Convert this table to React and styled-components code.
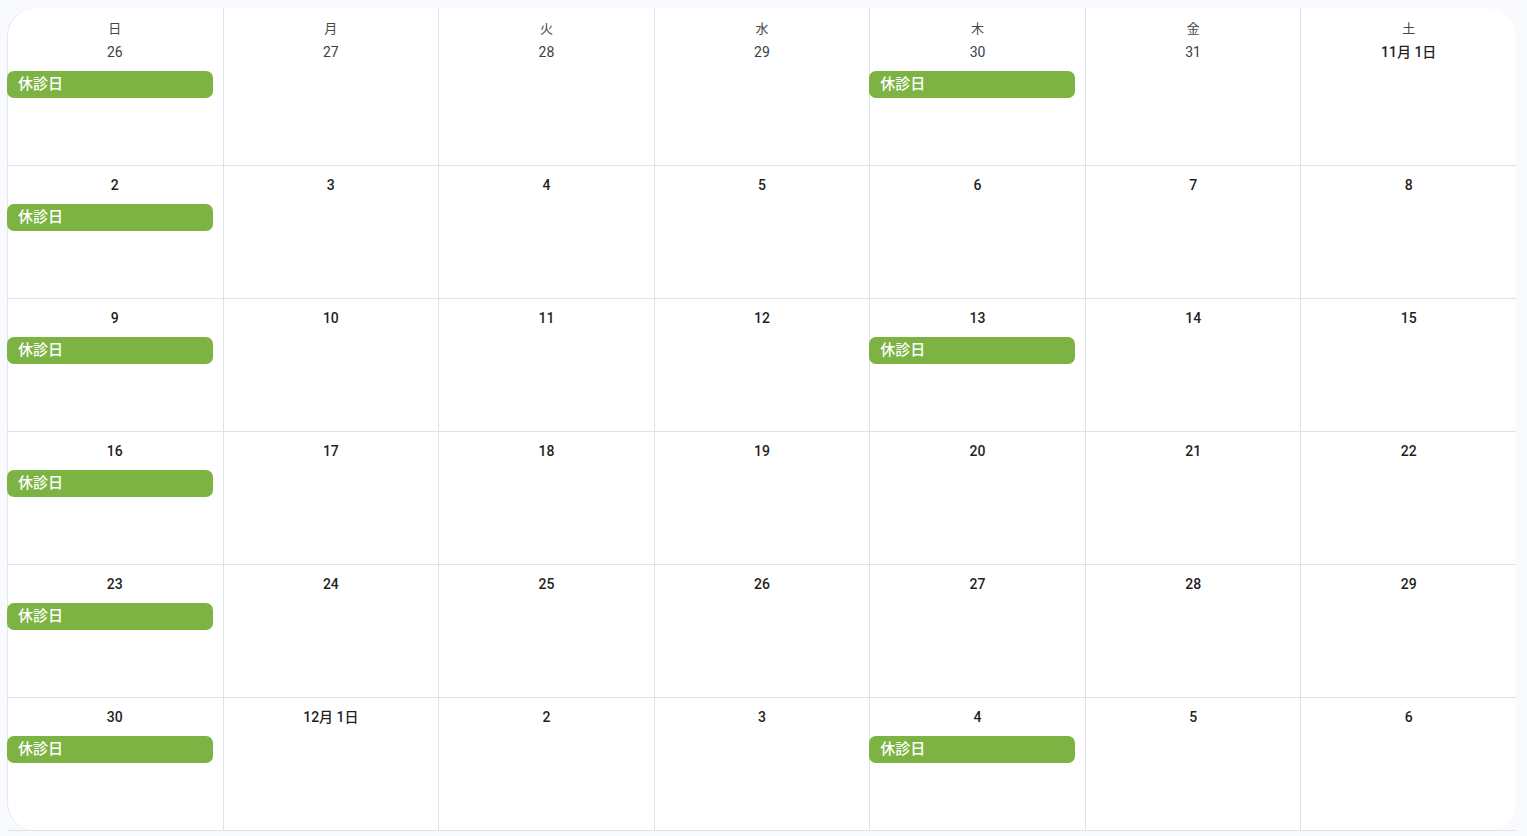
import React from "react";
import styled, { createGlobalStyle } from "styled-components";

const GlobalStyle = createGlobalStyle`
  html, body {
    margin: 0;
    padding: 0;
    background: #f8fafd;
  }
  body {
    font-family: Roboto, "Noto Sans CJK JP", sans-serif;
    color: #1f1f1f;
  }
`;

const Page = styled.div`
  padding: 8px 11px 0 7px;
`;

const Month = styled.div`
  display: grid;
  grid-template-columns: repeat(7, 1fr);
  grid-template-rows: 158px repeat(5, 133px);
  background: #fff;
  border-radius: 28px;
  box-shadow: inset 1px 0 0 #e3e7ee;
`;

const Cell = styled.div`
  display: flex;
  flex-direction: column;
  align-items: center;
  padding-top: ${(props) => (props.$top ? "8px" : "7px")};
  box-sizing: border-box;
  border-bottom: 1px solid #dde3ea;
  border-left: ${(props) => (props.$first ? "none" : "1px solid #dde3ea")};
  min-width: 0;
`;

const Weekday = styled.div`
  height: 24px;
  line-height: 24px;
  font-size: 13px;
  color: #444746;
  font-family: "Noto Sans CJK JP", sans-serif;
`;

const DateNum = styled.div`
  height: 24px;
  line-height: 24px;
  font-size: 14px;
  font-weight: ${(props) => (props.$light ? 400 : 500)};
  color: ${(props) => (props.$light ? "#3c4043" : "#1f1f1f")};
  font-family: Roboto, "Noto Sans CJK JP", sans-serif;
`;

const Chip = styled.div`
  align-self: stretch;
  margin: 7px 10px 0 ${(props) => (props.$first ? "0" : "-1px")};
  height: 27px;
  box-sizing: border-box;
  line-height: 24px;
  padding: 0 0 3px 11px;
  border-radius: 7px;
  background: #7cb342;
  color: #fff;
  font-size: 15px;
  font-weight: 500;
  font-family: "Noto Sans CJK JP", sans-serif;
`;

const weekdays = ["日", "月", "火", "水", "木", "金", "土"];

const weeks = [
  ["26", "27", "28", "29", "30", "31", "11月 1日"],
  ["2", "3", "4", "5", "6", "7", "8"],
  ["9", "10", "11", "12", "13", "14", "15"],
  ["16", "17", "18", "19", "20", "21", "22"],
  ["23", "24", "25", "26", "27", "28", "29"],
  ["30", "12月 1日", "2", "3", "4", "5", "6"],
];

// weeks where thursday is also closed
const closedThursday = [0, 2, 5];

const App = () => {
  return (
    <Page>
      <GlobalStyle />
      <Month>
        {weeks.map((week, w) =>
          week.map((day, d) => {
            const closed = d === 0 || (d === 4 && closedThursday.includes(w));
            const light = w === 0 && d < 6;
            return (
              <Cell key={`${w}-${d}`} $first={d === 0} $top={w === 0}>
                {w === 0 && <Weekday>{weekdays[d]}</Weekday>}
                <DateNum $light={light}>{day}</DateNum>
                {closed && <Chip $first={d === 0}>休診日</Chip>}
              </Cell>
            );
          })
        )}
      </Month>
    </Page>
  );
};

export default App;
